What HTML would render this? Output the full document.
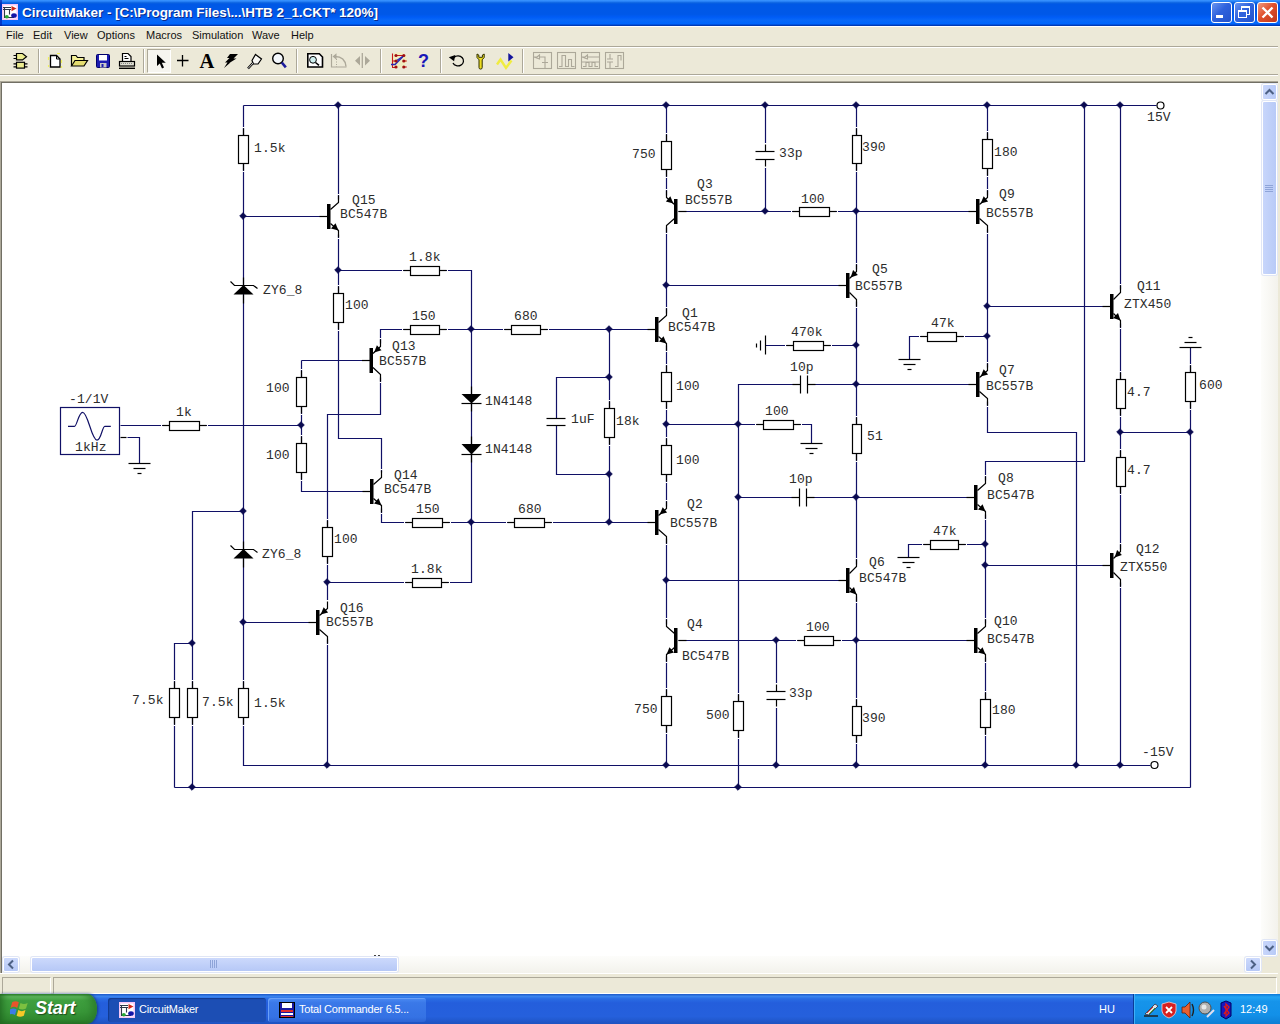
<!DOCTYPE html>
<html><head><meta charset="utf-8"><title>CircuitMaker</title>
<style>
html,body{margin:0;padding:0;width:1280px;height:1024px;overflow:hidden;background:#ece9d8;font-family:"Liberation Sans",sans-serif;}
#sch{position:absolute;left:0;top:0;}
#sch .b{fill:#fff;stroke:#000;stroke-width:1.2}
#sch .f{fill:#000;stroke:none}
#sch .w{fill:#fff;stroke:none}
#sch .t text{font-family:"Liberation Mono",monospace;font-size:13px;fill:#2c2c2c;stroke:none;letter-spacing:0.1px}

.abs{position:absolute}
#title{position:absolute;left:0;top:0;width:1280px;height:26px;
 background:linear-gradient(#3c96ff 0%,#2a84f8 5%,#0a62e0 11%,#0058e6 16%,#0058e8 55%,#005cf6 66%,#0868f8 78%,#0066fc 91%,#0048d0 96%,#002e9c 100%);}
#title .tt{position:absolute;left:22px;top:5px;color:#fff;font-weight:bold;font-size:13.5px;letter-spacing:-0.05px;white-space:nowrap;text-shadow:1px 1px 0 #0a2a8c;}
.tb{position:absolute;top:2px;width:19px;height:19px;border:1px solid #fff;border-radius:3px;
 background:linear-gradient(135deg,#6a95f0 0%,#2f62dd 45%,#2252cc 100%);}
.tb.x{background:linear-gradient(135deg,#f09a80 0%,#e0502c 45%,#c0381c 100%);}
#menu{position:absolute;left:0;top:26px;width:1280px;height:20px;background:#ece9d8;border-top:1px solid #fff;box-sizing:border-box}
#menu span{position:absolute;top:2px;font-size:11px;color:#111;}
.hl{position:absolute;left:0;width:1278px;height:1px;}
#tool{position:absolute;left:0;top:48px;width:1280px;height:26px;background:#ece9d8;}
.sep{position:absolute;top:49px;width:1px;height:24px;background:#aca899;box-shadow:1px 0 0 #fff;}
#canvas{position:absolute;left:2px;top:83px;width:1259px;height:873px;background:#fff;}
#vs{position:absolute;left:1261px;top:83px;width:17px;height:873px;background:linear-gradient(90deg,#fdfdfb,#f3f2ec);}
#hs{position:absolute;left:2px;top:956px;width:1259px;height:17px;background:linear-gradient(#fdfdfb,#f3f2ec);}
.sb{position:absolute;width:13px;height:14px;background:linear-gradient(90deg,#c8d6fb,#b8caf7);border:1px solid #fff;border-radius:2px;box-shadow:0 0 0 1px #e0e6f6;}
.sb.h{background:linear-gradient(#ccd9fc,#b6c8f6)}
#status{position:absolute;left:0;top:974px;width:1280px;height:20px;background:#ece9d8;}
.pan{position:absolute;top:977px;height:15px;border-top:1px solid #aca899;border-left:1px solid #aca899;border-right:1px solid #fff;border-bottom:1px solid #fff;}
#task{position:absolute;left:0;top:994px;width:1280px;height:30px;
 background:linear-gradient(#1c58c8 0%,#3a84ee 8%,#2a6ce4 16%,#245edc 30%,#2560dc 75%,#1d52c0 100%);}
#start{position:absolute;left:0;top:994px;width:97px;height:30px;border-radius:0 10px 10px 0 / 0 15px 15px 0;
 background:linear-gradient(#2a7e2a 0%,#5cb45c 9%,#3f9f3f 22%,#389638 60%,#2f882f 85%,#256f25 100%);box-shadow:1px 0 3px #163a80, inset 8px 0 8px -6px #1f661f, inset -10px 0 10px -6px #2a7a2a;}
#start b{position:absolute;left:35px;top:4px;font-size:18px;font-style:italic;color:#fff;text-shadow:1px 1px 1px #1c4c1c;letter-spacing:-0.1px;line-height:20px}
.tk{position:absolute;top:998px;height:24px;border-radius:3px;color:#fff;font-size:11px;}
.tk span{position:absolute;left:31px;top:5px;white-space:nowrap;letter-spacing:-0.2px}
#tray{position:absolute;left:1133px;top:994px;width:147px;height:30px;
 background:linear-gradient(#0c78d8 0%,#22a4f4 10%,#1694ea 25%,#1290e8 70%,#0d7ed4 100%);border-left:1px solid #0a3c98;box-shadow:inset 1px 0 0 #3fb0f8;}

</style></head><body>

<div id="title"><div class="abs" style="left:0;top:0;width:2px;height:26px;background:rgba(0,20,160,.55)"></div><svg class="abs" style="left:2px;top:4px" width="16" height="16"><rect x="0" y="0" width="16" height="16" fill="#f6c6f6"/><rect x="1.500" y="1.500" width="13" height="13" fill="#fff"/><path d="M1 3.500h8M1 5.500h8M2.500 3v11M7.500 5v5.500M3 13.500h9" stroke="#303848" fill="none" stroke-width="1.100"/><path d="M9.500 2l5 2.500l-5 2.800z" fill="#d42818"/><ellipse cx="12" cy="11.500" rx="2.800" ry="2.300" fill="#1414a8"/><ellipse cx="4.800" cy="12.800" rx="2" ry="1.800" fill="#28a838"/></svg><div class="tt">CircuitMaker - [C:\Program Files\...\HTB 2_1.CKT* 120%]</div>
<div class="tb" style="left:1211px"><div class="abs" style="left:4px;top:12px;width:7px;height:3px;background:#fff"></div></div>
<div class="tb" style="left:1234px"><div class="abs" style="left:6px;top:3px;width:7px;height:6px;border:1px solid #fff;border-top-width:2px"></div><div class="abs" style="left:3px;top:7px;width:7px;height:5px;border:1px solid #fff;border-top-width:2px;background:#2f62dd"></div></div>
<div class="tb x" style="left:1257px"><svg class="abs" style="left:0;top:0" width="19" height="19"><path d="M4.500 4.500l10 10M14.500 4.500l-10 10" stroke="#fff" stroke-width="2.400"/></svg></div>
</div>
<div id="menu"><span style="left:6px">File</span><span style="left:33px">Edit</span><span style="left:64px">View</span><span style="left:97px">Options</span><span style="left:146px">Macros</span><span style="left:192px">Simulation</span><span style="left:252px">Wave</span><span style="left:291px">Help</span></div>
<div class="hl" style="top:46px;background:#aca899"></div><div class="hl" style="top:47px;background:#fff"></div>
<div id="tool"></div>
<div class="hl" style="top:74px;background:#aca899"></div><div class="hl" style="top:75px;background:#fff"></div>
<div class="sep" style="left:38px"></div><div class="sep" style="left:143px"></div><div class="sep" style="left:296px"></div><div class="sep" style="left:380px"></div><div class="sep" style="left:440px"></div><div class="sep" style="left:522px"></div>
<div class="abs" style="left:147px;top:49px;width:22px;height:22px;background:#f6f5ef;border:1px solid #fff;border-top-color:#aca899;border-left-color:#aca899"></div>
<svg class="abs" style="left:0;top:0" width="1280" height="82" viewBox="0 0 1280 82"><g stroke="#000" stroke-width="1.2" fill="#ecec90"><path d="M16.5 53.500h6l4 3.200l-4 3.200h-6z"/><rect x="16.500" y="62.300" width="8" height="5.800"/></g><path d="M13.500 55.500h3M13.500 58.500h3M13.500 63.800h3M13.500 66.800h3M24.500 63.800h3M24.500 66.800h3" stroke="#000" stroke-width="1.200"/><path d="M50.500 55.500h6l3.500 3.500v8h-9.500z" fill="#fff" stroke="#000" stroke-width="1.300"/><path d="M56.500 55.500v3.500h3.500" fill="none" stroke="#000"/><path d="M48.500 57v3M48.500 65v2M61.500 60v3M61.500 66v2M57 53.500h3" stroke="#f0f060" stroke-width="1.200"/><path d="M71.500 66v-10.500h4.500l1.500 2h6.500v2.500" fill="#f4f098" stroke="#000" stroke-width="1.200"/><path d="M71.500 66l3.500-5.500h12.500l-3.500 5.500z" fill="#e4dc70" stroke="#000" stroke-width="1.200"/><rect x="96.500" y="54.500" width="13" height="13" rx="1" fill="#1c1cb0" stroke="#00006c"/><rect x="99" y="55" width="8" height="5.500" fill="#fff"/><rect x="100" y="63" width="6.500" height="4.500" fill="#c8c8c8"/><rect x="101.500" y="64" width="2" height="3" fill="#1c1cb0"/><path d="M122.500 61v-7.500h5.500l3 3v4.500" fill="#fff" stroke="#000" stroke-width="1.200"/><path d="M124.500 56.500h2M124.500 58.500h4" stroke="#000"/><rect x="119.500" y="61.500" width="15" height="4.500" fill="#e0e0d4" stroke="#000" stroke-width="1.200"/><path d="M119 68.300h16" stroke="#000" stroke-width="1.400"/><path d="M121 63.500h12" stroke="#888" stroke-dasharray="1 1"/><path d="M157 54.500v11.500l2.800-2.600l2.200 5l2-.900l-2.200-4.800h4z" fill="#000"/><path d="M182.500 55v11.500M177 60.500h11.500" stroke="#000" stroke-width="1.300"/><path d="M230 54h8l-4.500 4.500h3l-8 5l2-1l-6.500 5.500l3.500-5.500h-2.500l4.500-4.500h-2.500z" fill="#000"/><path d="M255.500 54.500l6 4.500l-3.500 5h-4.500l-1.500-3.500z" fill="#f8f8f4" stroke="#000" stroke-width="1.200"/><path d="M253 63l-5 5.500" stroke="#000" stroke-width="2.400"/><path d="M253 63l-5 5.500" stroke="#fff" stroke-width=".8"/><circle cx="278" cy="58.500" r="5.300" fill="#f4f8fc" stroke="#000" stroke-width="1.400"/><path d="M281.800 62.500l4 4.800" stroke="#1c1c9c" stroke-width="2.600"/><path d="M307.800 53.800h11.500l3.200 3.200v10h-14.700z" fill="#fff" stroke="#000" stroke-width="1.600"/><circle cx="313" cy="59.800" r="3.400" fill="#d0f0f0" stroke="#000"/><path d="M315.500 62.500l3.500 2.800" stroke="#000" stroke-width="1.600"/><path d="M331.500 54v13h15" stroke="#aca899" fill="none" stroke-width="1.200"/><path d="M335 56.500q10 0 11 10" stroke="#aca899" fill="none" stroke-width="1.400"/><path d="M332.500 56.500l4-3.200v6.400z" fill="#aca899"/><path d="M336.500 59v8" stroke="#aca899" stroke-dasharray="1 1.500"/><path d="M362.300 53v15" stroke="#aca899" stroke-width="1.300"/><path d="M360 56v9.500l-5-4.700zM365 56v9.500l5-4.700z" fill="#aca899"/><circle cx="399" cy="60" r="8" fill="#f4f0b0" opacity=".6"/><path d="M392.500 53.500v13.500M392 67.500h4M396 55.500h8M396 61h-4M403.800 61h3M403.800 67h3" stroke="#c81818" fill="none" stroke-width="1.100"/><path d="M391 64.500h4l9-9" stroke="#2828b4" stroke-width="1.500" fill="none"/><path d="M396 61l8-5.500" stroke="#2828b4" stroke-width="1.200"/><g fill="#a01010"><circle cx="396" cy="55.500" r="1.600"/><circle cx="403.800" cy="55.500" r="1.600"/><circle cx="396" cy="61" r="1.600"/><circle cx="403.800" cy="61" r="1.600"/><circle cx="396" cy="67" r="1.600"/><circle cx="403.800" cy="67" r="1.600"/></g><path d="M454 57.500a5.500 5 0 1 1 -1 5.500" stroke="#000" fill="none" stroke-width="1.300"/><path d="M448.800 57.200l6.500-2.200l-1.200 6.200z" fill="#000"/><path d="M477 54v3.500l2 2.300v7.700a1.600 1.600 0 0 0 3.200 0v-7.700l2-2.300v-3.500l-1.800 1v2.300h-3.600v-2.300z" fill="#ecdc20" stroke="#303000" stroke-width="1"/><path d="M497 64.500l3.500-5l5.500 8.500l5.500-7.500" stroke="#f0ec40" stroke-width="2.400" fill="none"/><path d="M508.300 53l5.200 4.300l-5.200 4.300z" fill="#14149c"/><g stroke="#aca899" fill="none" stroke-width="1.100"><rect x="533.500" y="52.500" width="18" height="16"/><path d="M534 57h3l2.500-2v4zM540 57h5v5M542 62.500h6M545 63v5.500"/><rect x="557.500" y="52.500" width="18" height="16"/><path d="M559 66.500h3v-11h3.500v11h3v-7h3v7h3"/><rect x="581.500" y="52.500" width="18" height="16"/><path d="M582 57h3l2.500-2v4zM588 57h11M582 62h17M583 66.500h3v-4h3v4h3v-4h3v4h3"/><rect x="605.500" y="52.500" width="18" height="16"/><path d="M607 59h6M610 54v5M607 62h6M610 62v6M615 66.500h3v-11h3v5"/></g></svg>
<div class="abs" style="left:198px;top:48px;width:18px;text-align:center;font-family:'Liberation Serif',serif;font-weight:bold;font-size:20.5px;color:#000;line-height:26px">A</div>
<div class="abs" style="left:418px;top:48px;font-family:'Liberation Sans',sans-serif;font-weight:bold;font-size:18px;color:#1818b8;line-height:26px">?</div>
<div class="abs" style="left:0;top:81px;width:1279px;height:893px;background:#aca899"></div>
<div class="abs" style="left:1px;top:82px;width:1277px;height:892px;background:#716f64"></div>
<div id="canvas"></div>
<div id="vs"></div><div id="hs"></div>
<div class="abs" style="left:1261px;top:956px;width:17px;height:17px;background:#ece9d8"></div>
<div class="abs" style="left:0;top:973px;width:1280px;height:1px;background:#fff"></div>
<div id="status"></div>
<div class="abs" style="left:1278px;top:76px;width:2px;height:920px;background:#ece9d8"></div>
<div class="pan" style="left:2px;width:47px"></div><div class="pan" style="left:53px;width:1222px"></div>
<!-- scrollbar pieces -->
<div class="sb" style="left:1262px;top:84px"></div><div class="sb" style="left:1262px;top:940px"></div>
<div class="sb" style="left:1262px;top:101px;height:172px"></div>
<div class="sb h" style="left:3px;top:957px;height:13px;width:14px"></div><div class="sb h" style="left:1245px;top:957px;height:13px;width:14px"></div>
<div class="sb h" style="left:31px;top:957px;height:13px;width:365px"></div>
<svg class="abs" style="left:1262px;top:84px" width="15" height="16"><path d="M3.500 10l4-4l4 4" stroke="#4d6185" stroke-width="2" fill="none"/></svg>
<svg class="abs" style="left:1262px;top:940px" width="15" height="16"><path d="M3.500 6l4 4l4-4" stroke="#4d6185" stroke-width="2" fill="none"/></svg>
<svg class="abs" style="left:3px;top:957px" width="16" height="15"><path d="M10 3.500l-4 4l4 4" stroke="#4d6185" stroke-width="2" fill="none"/></svg>
<svg class="abs" style="left:1245px;top:957px" width="16" height="15"><path d="M6 3.500l4 4l-4 4" stroke="#4d6185" stroke-width="2" fill="none"/></svg>
<svg class="abs" style="left:209px;top:960px" width="10" height="8"><path d="M1.500 0v8M3.500 0v8M5.500 0v8M7.500 0v8" stroke="#8ea4d8"/></svg>
<svg class="abs" style="left:1265px;top:184px" width="8" height="10"><path d="M0 1.500h8M0 3.500h8M0 5.500h8M0 7.500h8" stroke="#8ea4d8"/></svg>
<div class="abs" style="left:374px;top:955px;width:2px;height:1px;background:#444"></div><div class="abs" style="left:378px;top:955px;width:2px;height:1px;background:#444"></div>
<!-- taskbar -->
<div id="task"></div>
<div id="tray"></div>
<div id="start"><svg class="abs" style="left:10px;top:5px" width="21" height="20" viewBox="0 0 19 18"><path d="M2 3q3-2 6 0l-1.500 5q-3-2-6 0z" fill="#e8542c"/><path d="M9.500 3.500q3 2 6.500 0l-1.500 5q-3.500 2-6.500 0z" fill="#7cc040"/><path d="M0 9.500q3-2 6 0l-1.500 5q-3-2-6 0z" fill="#3c7ce8"/><path d="M7.500 10q3 2 6.500 0l-1.500 5q-3.500 2-6.500 0z" fill="#f8c828"/></svg><b>Start</b></div>
<div class="tk" style="left:108px;width:158px;background:#1c4eb4;box-shadow:inset 1px 1px 1px #123a90"><svg class="abs" style="left:11px;top:4px" width="16" height="16"><rect x="0" y="0" width="16" height="16" fill="#f6c6f6"/><rect x="1.500" y="1.500" width="13" height="13" fill="#fff"/><path d="M1 3.500h8M1 5.500h8M2.500 3v11M7.500 5v5.500M3 13.500h9" stroke="#303848" fill="none" stroke-width="1.100"/><path d="M9.500 2l5 2.500l-5 2.800z" fill="#d42818"/><ellipse cx="12" cy="11.500" rx="2.800" ry="2.300" fill="#1414a8"/><ellipse cx="4.800" cy="12.800" rx="2" ry="1.800" fill="#28a838"/></svg><span>CircuitMaker</span></div>
<div class="tk" style="left:268px;width:158px;background:linear-gradient(#4c8cf4,#3a78e8 20%,#3572e4 80%,#2c64d4);box-shadow:inset 1px 1px 0 #6aa0f8"><svg class="abs" style="left:11px;top:4px" width="16" height="16"><rect x="0.500" y="0.500" width="15" height="15" fill="#1818a0" stroke="#000"/><rect x="3" y="1" width="10" height="5" fill="#fff"/><rect x="2" y="8" width="12" height="2" fill="#e03030"/><rect x="2" y="11" width="12" height="2" fill="#fff"/><rect x="2" y="14" width="12" height="1" fill="#e03030"/></svg><span>Total Commander 6.5...</span></div>
<div class="abs" style="left:1099px;top:1003px;color:#fff;font-size:11px">HU</div>
<div class="abs" style="left:1240px;top:1003px;color:#fff;font-size:11px">12:49</div>
<svg class="abs" style="left:1143px;top:1000px" width="90" height="20" viewBox="0 0 90 20">
<path d="M2 14l10-10l3 2l-9 9z" fill="#e0e0e8" stroke="#303040" stroke-width=".8"/><path d="M1 16h14" stroke="#202020" stroke-width="1.500"/><path d="M4 13l6-6" stroke="#d03030"/><path d="M6 14l6-6" stroke="#30a030"/>
<path d="M26 2l7 2v7q-1 5-7 7q-6-2-7-7v-7z" fill="#d82020" stroke="#f0d0d0" stroke-width=".8"/><path d="M23 7l6 6M29 7l-6 6" stroke="#fff" stroke-width="1.800"/>
<path d="M39 7h3l5-5v16l-5-5h-3z" fill="#e86030" stroke="#602010" stroke-width=".8"/><path d="M49 4q3 6 0 12" stroke="#202020" fill="none" stroke-width="1.400"/>
<circle cx="62" cy="8" r="6" fill="#b0b0b0" stroke="#505050"/><circle cx="61" cy="7" r="2.500" fill="#e8e8e8"/><path d="M64 17l7-7" stroke="#e0e0f0" stroke-width="2"/>
<path d="M78 3l5-2l5 2v13l-5 3l-5-3z" fill="#1818c0" stroke="#000060"/><path d="M81 6l5 7l-3 3v-12l3 3l-5 7" stroke="#e01818" fill="none" stroke-width="1.300"/>
</svg>

<svg id="sch" width="1280" height="1024" viewBox="0 0 1280 1024"><g fill="none" stroke="#101066" stroke-width="1.2"><polyline points="243.5,105.5 1156.5,105.5"/><polyline points="243.5,105.5 243.5,765.5 1150.5,765.5"/><polyline points="174.5,787.5 1190.5,787.5"/><polyline points="243.5,216.5 320.5,216.5"/><polyline points="243.5,511.5 192.5,511.5 192.5,787.5"/><polyline points="192.5,643.5 174.5,643.5 174.5,787.5"/><polyline points="243.5,622.5 310.5,622.5"/><polyline points="338.5,105.5 338.5,199.5"/><polyline points="338.5,234.5 338.5,438.5 381.5,438.5 381.5,472.5"/><polyline points="338.5,270.5 471.5,270.5 471.5,582.5 327.5,582.5"/><polyline points="380.5,343.5 380.5,329.5 655.5,329.5"/><polyline points="380.5,377.5 380.5,414.5 327.5,414.5 327.5,600.5"/><polyline points="381.5,508.5 381.5,522.5 655.5,522.5"/><polyline points="301.5,360.5 362.5,360.5"/><polyline points="301.5,360.5 301.5,491.5 363.5,491.5"/><rect x="60.5" y="407.5" width="59" height="47" fill="#fff"/><path d="M68 426.300h6.500c2.500 0 4-14 8.200-14c5.300 0 8.800 27.800 14.300 27.800c4.200 0 5.200-13.800 7.800-13.800h6"/><polyline points="120.5,425.5 301.5,425.5"/><polyline points="127.5,437.5 139.5,437.5 139.5,463.5"/><polyline points="609.5,329.5 609.5,522.5"/><polyline points="609.5,377.5 556.5,377.5 556.5,418.5"/><polyline points="556.5,425.5 556.5,474.5 609.5,474.5"/><polyline points="666.5,105.5 666.5,195.5"/><polyline points="666.5,227.5 666.5,313.5"/><polyline points="666.5,345.5 666.5,506.5"/><polyline points="666.5,538.5 666.5,624.5"/><polyline points="666.5,656.5 666.5,765.5"/><polyline points="666.5,285.5 839.5,285.5"/><polyline points="666.5,580.5 839.5,580.5"/><polyline points="666.5,424.5 811.5,424.5 811.5,443.5"/><polyline points="795.5,384.5 738.5,384.5 738.5,787.5"/><polyline points="813.5,384.5 970.5,384.5"/><polyline points="738.5,497.5 794.5,497.5"/><polyline points="812.5,497.5 968.5,497.5"/><polyline points="678.5,211.5 976.5,211.5"/><polyline points="765.5,105.5 765.5,143.5"/><polyline points="765.5,167.5 765.5,211.5"/><polyline points="678.5,640.5 974.5,640.5"/><polyline points="776.5,640.5 776.5,683.5"/><polyline points="776.5,707.5 776.5,765.5"/><polyline points="856.5,105.5 856.5,269.5"/><polyline points="856.5,301.5 856.5,564.5"/><polyline points="856.5,596.5 856.5,765.5"/><polyline points="765.5,345.5 856.5,345.5"/><polyline points="987.5,105.5 987.5,195.5"/><polyline points="987.5,229.5 987.5,367.5"/><polyline points="987.5,306.5 1103.5,306.5"/><polyline points="987.5,336.5 909.5,336.5 909.5,359.5"/><polyline points="987.5,401.5 987.5,432.5 1076.5,432.5 1076.5,765.5"/><polyline points="1084.5,105.5 1084.5,461.5 985.5,461.5 985.5,480.5"/><polyline points="985.5,514.5 985.5,623.5"/><polyline points="985.5,544.5 908.5,544.5 908.5,557.5"/><polyline points="985.5,565.5 1103.5,565.5"/><polyline points="985.5,657.5 985.5,765.5"/><polyline points="1120.5,105.5 1120.5,289.5"/><polyline points="1120.5,323.5 1120.5,549.5"/><polyline points="1120.5,582.5 1120.5,765.5"/><polyline points="1120.5,432.5 1190.5,432.5"/><polyline points="1190.5,347.5 1190.5,787.5"/><polyline points="327.5,639.5 327.5,765.5"/></g><g fill="none" stroke="#000" stroke-width="1.2"><circle cx="1160.5" cy="105.5" r="3.5" class="b"/><circle cx="1154.5" cy="765" r="3.5" class="b"/><polyline points="243.5,128.5 243.5,135.5"/><polyline points="243.5,163.5 243.5,170.5"/><rect x="242.3" y="127" width="2.4" height="1" class="w"/><rect x="242.3" y="171" width="2.4" height="1" class="w"/><rect x="238.5" y="135.5" width="10" height="28" class="b"/><polyline points="243.5,681.5 243.5,688.5"/><polyline points="243.5,717.5 243.5,724.5"/><rect x="242.3" y="680" width="2.4" height="1" class="w"/><rect x="242.3" y="725" width="2.4" height="1" class="w"/><rect x="238.5" y="688.5" width="10" height="29" class="b"/><polygon points="233.5,294.5 253.5,294.5 243.5,285" class="f"/><polyline points="230.5,281.5 234.5,285.5 253.5,285.5 257.5,288.5"/><polyline points="243.5,277.5 243.5,285.5"/><polyline points="243.5,294.5 243.5,303.5"/><polygon points="233.5,558.5 253.5,558.5 243.5,549" class="f"/><polyline points="230.5,545.5 234.5,549.5 253.5,549.5 257.5,552.5"/><polyline points="243.5,541.5 243.5,549.5"/><polyline points="243.5,558.5 243.5,567.5"/><polyline points="174.5,681.5 174.5,688.5"/><polyline points="174.5,717.5 174.5,724.5"/><rect x="173.3" y="680" width="2.4" height="1" class="w"/><rect x="173.3" y="725" width="2.4" height="1" class="w"/><rect x="169.5" y="688.5" width="10" height="29" class="b"/><polyline points="192.5,681.5 192.5,688.5"/><polyline points="192.5,717.5 192.5,724.5"/><rect x="191.3" y="680" width="2.4" height="1" class="w"/><rect x="191.3" y="725" width="2.4" height="1" class="w"/><rect x="187.5" y="688.5" width="10" height="29" class="b"/><rect x="327" y="204" width="3.5" height="25" class="f"/><polyline points="319.5,216.5 327.5,216.5"/><polyline points="330.5,209.5 338.5,202.5 338.5,195.5"/><polyline points="330.5,223.5 338.5,230.5 338.5,237.5"/><rect x="337.3" y="194" width="2.4" height="1" class="w"/><rect x="337.3" y="238" width="2.4" height="1" class="w"/><polygon points="338.5,230.5 331.0,228.4 335.5,223.3" class="f"/><polyline points="403.5,270.5 410.5,270.5"/><polyline points="439.5,270.5 446.5,270.5"/><rect x="402" y="269.3" width="1" height="2.4" class="w"/><rect x="447" y="269.3" width="1" height="2.4" class="w"/><rect x="410.5" y="266.5" width="29" height="9" class="b"/><polyline points="338.5,286.5 338.5,293.5"/><polyline points="338.5,322.5 338.5,329.5"/><rect x="337.3" y="285" width="2.4" height="1" class="w"/><rect x="337.3" y="330" width="2.4" height="1" class="w"/><rect x="333.5" y="293.5" width="10" height="29" class="b"/><polyline points="405.5,582.5 412.5,582.5"/><polyline points="441.5,582.5 448.5,582.5"/><rect x="404" y="581.3" width="1" height="2.4" class="w"/><rect x="449" y="581.3" width="1" height="2.4" class="w"/><rect x="412.5" y="578.5" width="29" height="9" class="b"/><rect x="369.5" y="348" width="3.5" height="25" class="f"/><polyline points="362,360.5 370,360.5"/><polyline points="373,353.5 380.5,346.5 380.5,339.5"/><polyline points="373,367.5 380.5,374.5 380.5,381.5"/><rect x="379.3" y="338" width="2.4" height="1" class="w"/><rect x="379.3" y="382" width="2.4" height="1" class="w"/><polygon points="374.1,352.5 381.5,350.2 376.9,345.2" class="f"/><rect x="370" y="479" width="3.5" height="25" class="f"/><polyline points="362.5,491.5 370.5,491.5"/><polyline points="373.5,484.5 381.5,477.5 381.5,470.5"/><polyline points="373.5,498.5 381.5,505.5 381.5,512.5"/><rect x="380.3" y="469" width="2.4" height="1" class="w"/><rect x="380.3" y="513" width="2.4" height="1" class="w"/><polygon points="381.5,505.5 374.0,503.4 378.5,498.3" class="f"/><polyline points="403.5,329.5 410.5,329.5"/><polyline points="439.5,329.5 446.5,329.5"/><rect x="402" y="328.3" width="1" height="2.4" class="w"/><rect x="447" y="328.3" width="1" height="2.4" class="w"/><rect x="410.5" y="325.5" width="29" height="9" class="b"/><polyline points="405.5,522.5 412.5,522.5"/><polyline points="442.5,522.5 449.5,522.5"/><rect x="404" y="521.3" width="1" height="2.4" class="w"/><rect x="450" y="521.3" width="1" height="2.4" class="w"/><rect x="412.5" y="518.5" width="30" height="9" class="b"/><polyline points="504.5,329.5 511.5,329.5"/><polyline points="540.5,329.5 547.5,329.5"/><rect x="503" y="328.3" width="1" height="2.4" class="w"/><rect x="548" y="328.3" width="1" height="2.4" class="w"/><rect x="511.5" y="325.5" width="29" height="9" class="b"/><polyline points="507.5,522.5 514.5,522.5"/><polyline points="544.5,522.5 551.5,522.5"/><rect x="506" y="521.3" width="1" height="2.4" class="w"/><rect x="552" y="521.3" width="1" height="2.4" class="w"/><rect x="514.5" y="518.5" width="30" height="9" class="b"/><polygon points="461.5,394 481.5,394 471.5,403.5" class="f"/><polyline points="461.5,403.5 481.5,403.5"/><polyline points="471.5,386.5 471.5,394.5"/><polyline points="471.5,403.5 471.5,411.5"/><polygon points="461.5,444 481.5,444 471.5,454.5" class="f"/><polyline points="461.5,454.5 481.5,454.5"/><polyline points="471.5,436.5 471.5,444.5"/><polyline points="471.5,454.5 471.5,462.5"/><polyline points="301.5,370.5 301.5,377.5"/><polyline points="301.5,406.5 301.5,413.5"/><rect x="300.3" y="369" width="2.4" height="1" class="w"/><rect x="300.3" y="414" width="2.4" height="1" class="w"/><rect x="296.5" y="377.5" width="10" height="29" class="b"/><polyline points="301.5,436.5 301.5,443.5"/><polyline points="301.5,472.5 301.5,479.5"/><rect x="300.3" y="435" width="2.4" height="1" class="w"/><rect x="300.3" y="480" width="2.4" height="1" class="w"/><rect x="296.5" y="443.5" width="10" height="29" class="b"/><polyline points="327.5,520.5 327.5,527.5"/><polyline points="327.5,556.5 327.5,563.5"/><rect x="326.3" y="519" width="2.4" height="1" class="w"/><rect x="326.3" y="564" width="2.4" height="1" class="w"/><rect x="322.5" y="527.5" width="10" height="29" class="b"/><polyline points="162.5,425.5 169.5,425.5"/><polyline points="199.5,425.5 206.5,425.5"/><rect x="161" y="424.3" width="1" height="2.4" class="w"/><rect x="207" y="424.3" width="1" height="2.4" class="w"/><rect x="169.5" y="421.5" width="30" height="9" class="b"/><polyline points="120.5,437.5 126.5,437.5"/><polyline points="128.5,463.5 150.5,463.5"/><polyline points="133.5,468.5 145.5,468.5"/><polyline points="137.5,473.5 141.5,473.5"/><polyline points="609.5,401.5 609.5,408.5"/><polyline points="609.5,437.5 609.5,444.5"/><rect x="608.3" y="400" width="2.4" height="1" class="w"/><rect x="608.3" y="445" width="2.4" height="1" class="w"/><rect x="604.5" y="408.5" width="10" height="29" class="b"/><polyline points="546.5,418.5 565.5,418.5"/><polyline points="546.5,425.5 565.5,425.5"/><polyline points="666.5,134.5 666.5,141.5"/><polyline points="666.5,169.5 666.5,176.5"/><rect x="665.3" y="133" width="2.4" height="1" class="w"/><rect x="665.3" y="177" width="2.4" height="1" class="w"/><rect x="661.5" y="141.5" width="10" height="28" class="b"/><polyline points="666.5,689.5 666.5,696.5"/><polyline points="666.5,725.5 666.5,732.5"/><rect x="665.3" y="688" width="2.4" height="1" class="w"/><rect x="665.3" y="733" width="2.4" height="1" class="w"/><rect x="661.5" y="696.5" width="10" height="29" class="b"/><rect x="674" y="199" width="3.5" height="25" class="f"/><polyline points="678.5,211.5 686.5,211.5"/><polyline points="674.5,204.5 666.5,197.5 666.5,190.5"/><polyline points="674.5,218.5 666.5,225.5 666.5,232.5"/><rect x="665.3" y="189" width="2.4" height="1" class="w"/><rect x="665.3" y="233" width="2.4" height="1" class="w"/><polygon points="673.4,203.5 670.3,196.3 665.9,201.5" class="f"/><rect x="655" y="317" width="3.5" height="25" class="f"/><polyline points="647.5,329.5 655.5,329.5"/><polyline points="658.5,322.5 666.5,315.5 666.5,308.5"/><polyline points="658.5,336.5 666.5,343.5 666.5,350.5"/><rect x="665.3" y="307" width="2.4" height="1" class="w"/><rect x="665.3" y="351" width="2.4" height="1" class="w"/><polygon points="666.5,343.5 659.0,341.4 663.5,336.3" class="f"/><rect x="655" y="510" width="3.5" height="25" class="f"/><polyline points="647.5,522.5 655.5,522.5"/><polyline points="658.5,515.5 666.5,508.5 666.5,501.5"/><polyline points="658.5,529.5 666.5,536.5 666.5,543.5"/><rect x="665.3" y="500" width="2.4" height="1" class="w"/><rect x="665.3" y="544" width="2.4" height="1" class="w"/><polygon points="659.6,514.5 667.1,512.5 662.7,507.3" class="f"/><rect x="674" y="628" width="3.5" height="25" class="f"/><polyline points="678.5,640.5 686.5,640.5"/><polyline points="674.5,633.5 666.5,626.5 666.5,619.5"/><polyline points="674.5,647.5 666.5,654.5 666.5,661.5"/><rect x="665.3" y="618" width="2.4" height="1" class="w"/><rect x="665.3" y="662" width="2.4" height="1" class="w"/><polygon points="666.5,654.5 669.5,647.3 674.0,652.4" class="f"/><polyline points="666.5,365.5 666.5,372.5"/><polyline points="666.5,401.5 666.5,408.5"/><rect x="665.3" y="364" width="2.4" height="1" class="w"/><rect x="665.3" y="409" width="2.4" height="1" class="w"/><rect x="661.5" y="372.5" width="10" height="29" class="b"/><polyline points="666.5,438.5 666.5,445.5"/><polyline points="666.5,474.5 666.5,481.5"/><rect x="665.3" y="437" width="2.4" height="1" class="w"/><rect x="665.3" y="482" width="2.4" height="1" class="w"/><rect x="661.5" y="445.5" width="10" height="29" class="b"/><polyline points="800.5,443.5 822.5,443.5"/><polyline points="805.5,448.5 817.5,448.5"/><polyline points="809.5,453.5 813.5,453.5"/><polyline points="756.5,424.5 763.5,424.5"/><polyline points="793.5,424.5 800.5,424.5"/><rect x="755" y="423.3" width="1" height="2.4" class="w"/><rect x="801" y="423.3" width="1" height="2.4" class="w"/><rect x="763.5" y="420.5" width="30" height="9" class="b"/><polyline points="738.5,694.5 738.5,701.5"/><polyline points="738.5,730.5 738.5,737.5"/><rect x="737.3" y="693" width="2.4" height="1" class="w"/><rect x="737.3" y="738" width="2.4" height="1" class="w"/><rect x="733.5" y="701.5" width="10" height="29" class="b"/><polyline points="800.5,375.5 800.5,393.5"/><polyline points="807.5,375.5 807.5,393.5"/><polyline points="792.5,384.5 800.5,384.5"/><polyline points="807.5,384.5 815.5,384.5"/><polyline points="799.5,488.5 799.5,506.5"/><polyline points="806.5,488.5 806.5,506.5"/><polyline points="791.5,497.5 799.5,497.5"/><polyline points="806.5,497.5 814.5,497.5"/><polyline points="755.5,151.5 774.5,151.5"/><polyline points="755.5,159.5 774.5,159.5"/><polyline points="765.5,144.5 765.5,151.5"/><polyline points="765.5,159.5 765.5,166.5"/><rect x="764.3" y="143" width="2.4" height="1" class="w"/><rect x="764.3" y="167" width="2.4" height="1" class="w"/><polyline points="792.5,211.5 799.5,211.5"/><polyline points="829.5,211.5 836.5,211.5"/><rect x="791" y="210.3" width="1" height="2.4" class="w"/><rect x="837" y="210.3" width="1" height="2.4" class="w"/><rect x="799.5" y="207.5" width="30" height="9" class="b"/><polyline points="766.5,691.5 785.5,691.5"/><polyline points="766.5,699.5 785.5,699.5"/><polyline points="776.5,684.5 776.5,691.5"/><polyline points="776.5,699.5 776.5,706.5"/><rect x="775.3" y="683" width="2.4" height="1" class="w"/><rect x="775.3" y="707" width="2.4" height="1" class="w"/><polyline points="797.5,640.5 804.5,640.5"/><polyline points="833.5,640.5 840.5,640.5"/><rect x="796" y="639.3" width="1" height="2.4" class="w"/><rect x="841" y="639.3" width="1" height="2.4" class="w"/><rect x="804.5" y="636.5" width="29" height="9" class="b"/><polyline points="856.5,128.5 856.5,135.5"/><polyline points="856.5,163.5 856.5,170.5"/><rect x="855.3" y="127" width="2.4" height="1" class="w"/><rect x="855.3" y="171" width="2.4" height="1" class="w"/><rect x="852.5" y="135.5" width="9" height="28" class="b"/><polyline points="856.5,417.5 856.5,424.5"/><polyline points="856.5,453.5 856.5,460.5"/><rect x="855.3" y="416" width="2.4" height="1" class="w"/><rect x="855.3" y="461" width="2.4" height="1" class="w"/><rect x="852.5" y="424.5" width="9" height="29" class="b"/><polyline points="856.5,699.5 856.5,706.5"/><polyline points="856.5,735.5 856.5,742.5"/><rect x="855.3" y="698" width="2.4" height="1" class="w"/><rect x="855.3" y="743" width="2.4" height="1" class="w"/><rect x="852.5" y="706.5" width="9" height="29" class="b"/><rect x="846" y="273" width="3.5" height="25" class="f"/><polyline points="838.5,285.5 846.5,285.5"/><polyline points="849.5,278.5 856.5,271.5 856.5,264.5"/><polyline points="849.5,292.5 856.5,299.5 856.5,306.5"/><rect x="855.3" y="263" width="2.4" height="1" class="w"/><rect x="855.3" y="307" width="2.4" height="1" class="w"/><polygon points="850.6,277.4 857.9,274.9 853.1,270.1" class="f"/><rect x="846" y="568" width="3.5" height="25" class="f"/><polyline points="838.5,580.5 846.5,580.5"/><polyline points="849.5,573.5 856.5,566.5 856.5,559.5"/><polyline points="849.5,587.5 856.5,594.5 856.5,601.5"/><rect x="855.3" y="558" width="2.4" height="1" class="w"/><rect x="855.3" y="602" width="2.4" height="1" class="w"/><polygon points="856.5,594.5 849.1,592.0 854.0,587.1" class="f"/><polyline points="786.5,345.5 793.5,345.5"/><polyline points="823.5,345.5 830.5,345.5"/><rect x="785" y="344.3" width="1" height="2.4" class="w"/><rect x="831" y="344.3" width="1" height="2.4" class="w"/><rect x="793.5" y="341.5" width="30" height="9" class="b"/><polyline points="765.5,335.5 765.5,354.5"/><polyline points="760.5,340.5 760.5,350.5"/><polyline points="756.5,343.5 756.5,347.5"/><polyline points="987.5,132.5 987.5,139.5"/><polyline points="987.5,168.5 987.5,175.5"/><rect x="986.3" y="131" width="2.4" height="1" class="w"/><rect x="986.3" y="176" width="2.4" height="1" class="w"/><rect x="982.5" y="139.5" width="10" height="29" class="b"/><rect x="976" y="199" width="3.5" height="25" class="f"/><polyline points="968.5,211.5 976.5,211.5"/><polyline points="979.5,204.5 987.5,197.5 987.5,190.5"/><polyline points="979.5,218.5 987.5,225.5 987.5,232.5"/><rect x="986.3" y="189" width="2.4" height="1" class="w"/><rect x="986.3" y="233" width="2.4" height="1" class="w"/><polygon points="980.6,203.5 988.1,201.5 983.7,196.3" class="f"/><polyline points="920.5,336.5 927.5,336.5"/><polyline points="956.5,336.5 963.5,336.5"/><rect x="919" y="335.3" width="1" height="2.4" class="w"/><rect x="964" y="335.3" width="1" height="2.4" class="w"/><rect x="927.5" y="332.5" width="29" height="9" class="b"/><polyline points="898.5,359.5 920.5,359.5"/><polyline points="903.5,364.5 915.5,364.5"/><polyline points="907.5,369.5 911.5,369.5"/><rect x="976" y="372" width="3.5" height="25" class="f"/><polyline points="968.5,384.5 976.5,384.5"/><polyline points="979.5,377.5 987.5,370.5 987.5,363.5"/><polyline points="979.5,391.5 987.5,398.5 987.5,405.5"/><rect x="986.3" y="362" width="2.4" height="1" class="w"/><rect x="986.3" y="406" width="2.4" height="1" class="w"/><polygon points="980.6,376.5 988.1,374.5 983.7,369.3" class="f"/><rect x="974" y="485" width="3.5" height="25" class="f"/><polyline points="966.5,497.5 974.5,497.5"/><polyline points="977.5,490.5 985.5,483.5 985.5,476.5"/><polyline points="977.5,504.5 985.5,511.5 985.5,518.5"/><rect x="984.3" y="475" width="2.4" height="1" class="w"/><rect x="984.3" y="519" width="2.4" height="1" class="w"/><polygon points="985.5,511.5 978.0,509.4 982.5,504.3" class="f"/><polyline points="923.5,544.5 930.5,544.5"/><polyline points="958.5,544.5 965.5,544.5"/><rect x="922" y="543.3" width="1" height="2.4" class="w"/><rect x="966" y="543.3" width="1" height="2.4" class="w"/><rect x="930.5" y="540.5" width="28" height="9" class="b"/><polyline points="897.5,557.5 919.5,557.5"/><polyline points="902.5,562.5 914.5,562.5"/><polyline points="906.5,567.5 910.5,567.5"/><rect x="974" y="628" width="3.5" height="25" class="f"/><polyline points="966.5,640.5 974.5,640.5"/><polyline points="977.5,633.5 985.5,626.5 985.5,619.5"/><polyline points="977.5,647.5 985.5,654.5 985.5,661.5"/><rect x="984.3" y="618" width="2.4" height="1" class="w"/><rect x="984.3" y="662" width="2.4" height="1" class="w"/><polygon points="985.5,654.5 978.0,652.4 982.5,647.3" class="f"/><polyline points="985.5,692.5 985.5,699.5"/><polyline points="985.5,727.5 985.5,734.5"/><rect x="984.3" y="691" width="2.4" height="1" class="w"/><rect x="984.3" y="735" width="2.4" height="1" class="w"/><rect x="980.5" y="699.5" width="10" height="28" class="b"/><rect x="1110" y="294" width="3.5" height="25" class="f"/><polyline points="1102.5,306.5 1110.5,306.5"/><polyline points="1113.5,299.5 1120.5,292.5 1120.5,285.5"/><polyline points="1113.5,313.5 1120.5,320.5 1120.5,327.5"/><rect x="1119.3" y="284" width="2.4" height="1" class="w"/><rect x="1119.3" y="328" width="2.4" height="1" class="w"/><polygon points="1120.5,320.5 1113.1,318.0 1118.0,313.1" class="f"/><polyline points="1120.5,372.5 1120.5,379.5"/><polyline points="1120.5,408.5 1120.5,415.5"/><rect x="1119.3" y="371" width="2.4" height="1" class="w"/><rect x="1119.3" y="416" width="2.4" height="1" class="w"/><rect x="1116.5" y="379.5" width="9" height="29" class="b"/><polyline points="1120.5,450.5 1120.5,457.5"/><polyline points="1120.5,486.5 1120.5,493.5"/><rect x="1119.3" y="449" width="2.4" height="1" class="w"/><rect x="1119.3" y="494" width="2.4" height="1" class="w"/><rect x="1116.5" y="457.5" width="9" height="29" class="b"/><rect x="1110" y="553" width="3.5" height="25" class="f"/><polyline points="1102.5,565.5 1110.5,565.5"/><polyline points="1113.5,558.5 1120.5,551.5 1120.5,544.5"/><polyline points="1113.5,572.5 1120.5,579.5 1120.5,586.5"/><rect x="1119.3" y="543" width="2.4" height="1" class="w"/><rect x="1119.3" y="587" width="2.4" height="1" class="w"/><polygon points="1114.6,557.4 1121.9,554.9 1117.1,550.1" class="f"/><polyline points="1190.5,365.5 1190.5,372.5"/><polyline points="1190.5,401.5 1190.5,408.5"/><rect x="1189.3" y="364" width="2.4" height="1" class="w"/><rect x="1189.3" y="409" width="2.4" height="1" class="w"/><rect x="1185.5" y="372.5" width="10" height="29" class="b"/><polyline points="1179.5,347.5 1201.5,347.5"/><polyline points="1184.5,342.5 1196.5,342.5"/><polyline points="1188.5,337.5 1192.5,337.5"/><rect x="316" y="610" width="3.5" height="25" class="f"/><polyline points="308.5,622.5 316.5,622.5"/><polyline points="319.5,615.5 327.5,608.5 327.5,601.5"/><polyline points="319.5,629.5 327.5,636.5 327.5,643.5"/><rect x="326.3" y="600" width="2.4" height="1" class="w"/><rect x="326.3" y="644" width="2.4" height="1" class="w"/><polygon points="320.6,614.5 328.1,612.5 323.7,607.3" class="f"/></g><g fill="#0a0a50" stroke="#0a0a50" stroke-width="0.8" stroke-linejoin="round"><path d="M243 212.7l3.3 3.3l-3.3 3.3l-3.3 -3.3z"/><path d="M243 507.7l3.3 3.3l-3.3 3.3l-3.3 -3.3z"/><path d="M192 639.7l3.3 3.3l-3.3 3.3l-3.3 -3.3z"/><path d="M192 783.7l3.3 3.3l-3.3 3.3l-3.3 -3.3z"/><path d="M243 618.7l3.3 3.3l-3.3 3.3l-3.3 -3.3z"/><path d="M338 101.7l3.3 3.3l-3.3 3.3l-3.3 -3.3z"/><path d="M338 266.7l3.3 3.3l-3.3 3.3l-3.3 -3.3z"/><path d="M471 325.7l3.3 3.3l-3.3 3.3l-3.3 -3.3z"/><path d="M471 518.7l3.3 3.3l-3.3 3.3l-3.3 -3.3z"/><path d="M301 421.7l3.3 3.3l-3.3 3.3l-3.3 -3.3z"/><path d="M327 578.7l3.3 3.3l-3.3 3.3l-3.3 -3.3z"/><path d="M609 325.7l3.3 3.3l-3.3 3.3l-3.3 -3.3z"/><path d="M609 373.7l3.3 3.3l-3.3 3.3l-3.3 -3.3z"/><path d="M609 470.7l3.3 3.3l-3.3 3.3l-3.3 -3.3z"/><path d="M609 518.7l3.3 3.3l-3.3 3.3l-3.3 -3.3z"/><path d="M666 101.7l3.3 3.3l-3.3 3.3l-3.3 -3.3z"/><path d="M666 761.7l3.3 3.3l-3.3 3.3l-3.3 -3.3z"/><path d="M666 281.7l3.3 3.3l-3.3 3.3l-3.3 -3.3z"/><path d="M666 576.7l3.3 3.3l-3.3 3.3l-3.3 -3.3z"/><path d="M666 420.7l3.3 3.3l-3.3 3.3l-3.3 -3.3z"/><path d="M738 420.7l3.3 3.3l-3.3 3.3l-3.3 -3.3z"/><path d="M738 493.7l3.3 3.3l-3.3 3.3l-3.3 -3.3z"/><path d="M738 783.7l3.3 3.3l-3.3 3.3l-3.3 -3.3z"/><path d="M765 207.7l3.3 3.3l-3.3 3.3l-3.3 -3.3z"/><path d="M856 207.7l3.3 3.3l-3.3 3.3l-3.3 -3.3z"/><path d="M765 101.7l3.3 3.3l-3.3 3.3l-3.3 -3.3z"/><path d="M776 636.7l3.3 3.3l-3.3 3.3l-3.3 -3.3z"/><path d="M856 636.7l3.3 3.3l-3.3 3.3l-3.3 -3.3z"/><path d="M776 761.7l3.3 3.3l-3.3 3.3l-3.3 -3.3z"/><path d="M856 101.7l3.3 3.3l-3.3 3.3l-3.3 -3.3z"/><path d="M856 341.7l3.3 3.3l-3.3 3.3l-3.3 -3.3z"/><path d="M856 380.7l3.3 3.3l-3.3 3.3l-3.3 -3.3z"/><path d="M856 493.7l3.3 3.3l-3.3 3.3l-3.3 -3.3z"/><path d="M856 761.7l3.3 3.3l-3.3 3.3l-3.3 -3.3z"/><path d="M987 101.7l3.3 3.3l-3.3 3.3l-3.3 -3.3z"/><path d="M987 302.7l3.3 3.3l-3.3 3.3l-3.3 -3.3z"/><path d="M987 332.7l3.3 3.3l-3.3 3.3l-3.3 -3.3z"/><path d="M1076 761.7l3.3 3.3l-3.3 3.3l-3.3 -3.3z"/><path d="M1084 101.7l3.3 3.3l-3.3 3.3l-3.3 -3.3z"/><path d="M985 540.7l3.3 3.3l-3.3 3.3l-3.3 -3.3z"/><path d="M985 561.7l3.3 3.3l-3.3 3.3l-3.3 -3.3z"/><path d="M985 761.7l3.3 3.3l-3.3 3.3l-3.3 -3.3z"/><path d="M1120 101.7l3.3 3.3l-3.3 3.3l-3.3 -3.3z"/><path d="M1120 428.7l3.3 3.3l-3.3 3.3l-3.3 -3.3z"/><path d="M1120 761.7l3.3 3.3l-3.3 3.3l-3.3 -3.3z"/><path d="M1190 428.7l3.3 3.3l-3.3 3.3l-3.3 -3.3z"/><path d="M327 761.7l3.3 3.3l-3.3 3.3l-3.3 -3.3z"/></g><g class="t"><text x="1147" y="121">15V</text><text x="1142" y="755.5">-15V</text><text x="254" y="152">1.5k</text><text x="254" y="707">1.5k</text><text x="263" y="294">ZY6_8</text><text x="262" y="558">ZY6_8</text><text x="132" y="704">7.5k</text><text x="202" y="706">7.5k</text><text x="352" y="204">Q15</text><text x="340" y="218">BC547B</text><text x="409" y="261">1.8k</text><text x="345" y="309">100</text><text x="411" y="573">1.8k</text><text x="392" y="350">Q13</text><text x="379" y="365">BC557B</text><text x="394" y="479">Q14</text><text x="384" y="493">BC547B</text><text x="412" y="320">150</text><text x="416" y="513">150</text><text x="514" y="320">680</text><text x="518" y="513">680</text><text x="485" y="405">1N4148</text><text x="485" y="453">1N4148</text><text x="266" y="392">100</text><text x="266" y="459">100</text><text x="334" y="543">100</text><text x="69" y="403">-1/1V</text><text x="75" y="451">1kHz</text><text x="176" y="416">1k</text><text x="616" y="425">18k</text><text x="571" y="423">1uF</text><text x="632" y="158">750</text><text x="634" y="713">750</text><text x="697" y="188">Q3</text><text x="685" y="204">BC557B</text><text x="682" y="317">Q1</text><text x="668" y="331">BC547B</text><text x="687" y="508">Q2</text><text x="670" y="527">BC557B</text><text x="687" y="628">Q4</text><text x="682" y="660">BC547B</text><text x="676" y="390">100</text><text x="676" y="464">100</text><text x="765" y="415">100</text><text x="706" y="719">500</text><text x="790" y="371">10p</text><text x="789" y="483">10p</text><text x="779" y="157">33p</text><text x="801" y="203">100</text><text x="789" y="697">33p</text><text x="806" y="631">100</text><text x="862" y="151">390</text><text x="867" y="440">51</text><text x="862" y="722">390</text><text x="872" y="273">Q5</text><text x="855" y="290">BC557B</text><text x="869" y="566">Q6</text><text x="859" y="582">BC547B</text><text x="791" y="336">470k</text><text x="994" y="156">180</text><text x="999" y="198">Q9</text><text x="986" y="217">BC557B</text><text x="931" y="327">47k</text><text x="999" y="374">Q7</text><text x="986" y="390">BC557B</text><text x="998" y="482">Q8</text><text x="987" y="499">BC547B</text><text x="933" y="535">47k</text><text x="994" y="625">Q10</text><text x="987" y="643">BC547B</text><text x="992" y="714">180</text><text x="1137" y="290">Q11</text><text x="1124" y="308">ZTX450</text><text x="1127" y="396">4.7</text><text x="1127" y="474">4.7</text><text x="1136" y="553">Q12</text><text x="1120" y="571">ZTX550</text><text x="1199" y="389">600</text><text x="340" y="612">Q16</text><text x="326" y="626">BC557B</text></g></svg>
</body></html>
